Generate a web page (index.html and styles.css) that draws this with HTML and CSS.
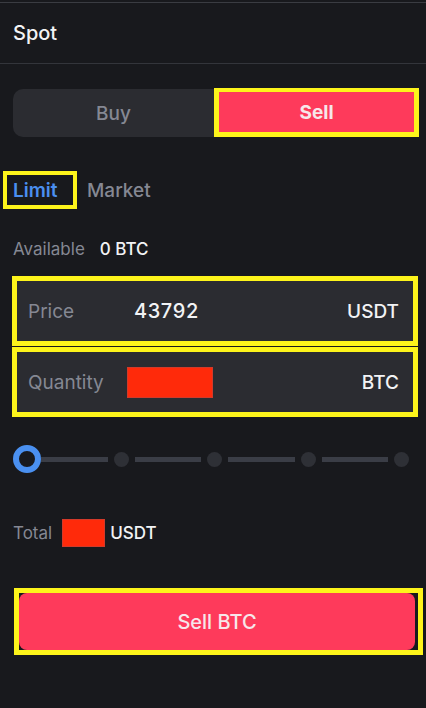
FILE: index.html
```html
<!DOCTYPE html>
<html>
<head>
<meta charset="utf-8">
<link rel="stylesheet" href="styles.css">
</head>
<body>
<div class="page">
  <div class="topline"></div>
  <header class="header">Spot</header>
  <div class="content">
    <div class="toggle">
      <div class="tab-buy">Buy</div>
      <div class="tab-sell-wrap"><div class="tab-sell">Sell</div></div>
    </div>
    <div class="types">
      <div class="type-active">Limit</div>
      <div class="type">Market</div>
    </div>
    <div class="avail">
      <span class="muted">Available</span>
      <span class="avail-val">0 BTC</span>
    </div>
    <div class="fields">
      <div class="field-wrap">
        <div class="field">
          <span class="field-label">Price</span>
          <span class="field-val">43792</span>
          <span class="field-unit">USDT</span>
        </div>
      </div>
      <div class="field-wrap">
        <div class="field">
          <span class="field-label">Quantity</span>
          <span class="redact redact-qty"></span>
          <span class="field-unit">BTC</span>
        </div>
      </div>
    </div>
    <div class="slider">
      <span class="knob"></span>
      <span class="seg"></span>
      <span class="dot"></span>
      <span class="seg"></span>
      <span class="dot"></span>
      <span class="seg"></span>
      <span class="dot"></span>
      <span class="seg"></span>
      <span class="dot"></span>
    </div>
    <div class="total">
      <span class="muted">Total</span>
      <span class="redact redact-total"></span>
      <span class="total-unit">USDT</span>
    </div>
    <div class="submit-wrap">
      <div class="submit">Sell BTC</div>
    </div>
  </div>
</div>
</body>
</html>
```

FILE: styles.css
```css
* { box-sizing: border-box; }
html, body { margin: 0; padding: 0; }
body {
  background: #18191d;
  font-family: Inter, "Noto Sans", sans-serif;
  color: #eaecef;
  width: 426px;
  height: 708px;
  overflow: hidden;
}
.page { display: flex; flex-direction: column; }
.topline {
  height: 1px;
  margin-top: 2px;
  background: #3a3c42;
}
.header {
  height: 61px;
  display: flex;
  align-items: center;
  padding-left: 13px;
  font-size: 20px;
  font-weight: 500;
  color: #f2f3f5;
  border-bottom: 1px solid #33353b;
}
.content {
  display: flex;
  flex-direction: column;
  padding: 0 0 0 13px;
}
.toggle {
  margin-top: 24px;
  display: flex;
  height: 49px;
  width: 406px;
}
.tab-buy {
  width: 201px;
  height: 48px;
  margin-top: 1px;
  background: #2b2c31;
  border-radius: 10px 0 0 10px;
  display: flex;
  align-items: center;
  justify-content: center;
  font-size: 19px;
  font-weight: 500;
  color: #858893;
}
.tab-sell-wrap {
  flex: 1;
  border: 5px solid #fdf41b;
  border-top-width: 4px;
  background: #2b2c31;
}
.tab-sell {
  height: 100%;
  background: #fe3a5b;
  display: flex;
  align-items: center;
  justify-content: center;
  font-size: 19px;
  font-weight: 700;
  color: #f7e6ea;
}
.types {
  margin-top: 34px;
  margin-left: -10px;
  display: flex;
  align-items: center;
  gap: 10px;
}
.type-active {
  border: 4px solid #fdf41b;
  height: 38px;
  width: 74px;
  padding-left: 6px;
  display: flex;
  align-items: center;
  font-size: 19px;
  font-weight: 600;
  color: #4b8ff0;
}
.type {
  font-size: 19px;
  font-weight: 500;
  color: #858893;
}
.avail {
  margin-top: 29px;
  height: 22px;
  display: flex;
  align-items: center;
  font-size: 17px;
}
.muted { color: #858893; }
.avail-val {
  margin-left: 15px;
  color: #f2f3f5;
  font-weight: 500;
}
.fields {
  margin-top: 16px;
  margin-left: -1px;
  display: flex;
  flex-direction: column;
  gap: 1px;
  width: 406px;
}
.field-wrap {
  height: 70px;
  border: 5px solid #fdf41b;
  background: #2b2c31;
}
.field {
  height: 100%;
  display: flex;
  align-items: center;
  padding: 0 14px 0 11px;
  font-size: 19px;
}
.field-label {
  color: #858893;
  width: 106px;
}
.field-val {
  color: #f2f3f5;
  font-weight: 500;
  font-size: 20px;
  letter-spacing: 0.6px;
}
.field-unit {
  margin-left: auto;
  color: #f2f3f5;
  font-weight: 500;
}
.redact {
  display: inline-block;
  background: #ff2a0a;
  border: 1px solid #d23a2a;
}
.redact-qty {
  width: 86px;
  height: 31px;
  margin-left: -7px;
}
.slider {
  margin-top: 28px;
  display: flex;
  align-items: center;
  width: 396px;
  height: 28px;
}
.knob {
  width: 28px;
  height: 28px;
  border-radius: 50%;
  border: 6px solid #4a90f0;
  background: #18191d;
  flex: none;
}
.seg {
  flex: 1;
  height: 5px;
  background: #3a3d46;
  margin: 0 6px;
}
.knob + .seg { margin-left: 0; }
.dot {
  width: 15px;
  height: 15px;
  border-radius: 50%;
  background: #2e3036;
  flex: none;
}
.total {
  margin-top: 46px;
  display: flex;
  align-items: center;
  height: 28px;
  font-size: 17px;
}
.redact-total {
  width: 43px;
  height: 28px;
  margin-left: 10px;
}
.total-unit {
  margin-left: 5px;
  color: #f2f3f5;
  font-weight: 500;
}
.submit-wrap {
  margin-top: 41px;
  margin-left: 1px;
  width: 409px;
  height: 67px;
  border: 5px solid #fdf41b;
  background: #18191d;
  padding-right: 3px;
}
.submit {
  height: 100%;
  background: #fe3a5b;
  border-radius: 8px;
  display: flex;
  align-items: center;
  justify-content: center;
  font-size: 20px;
  font-weight: 500;
  color: #f7e6ea;
}
```
